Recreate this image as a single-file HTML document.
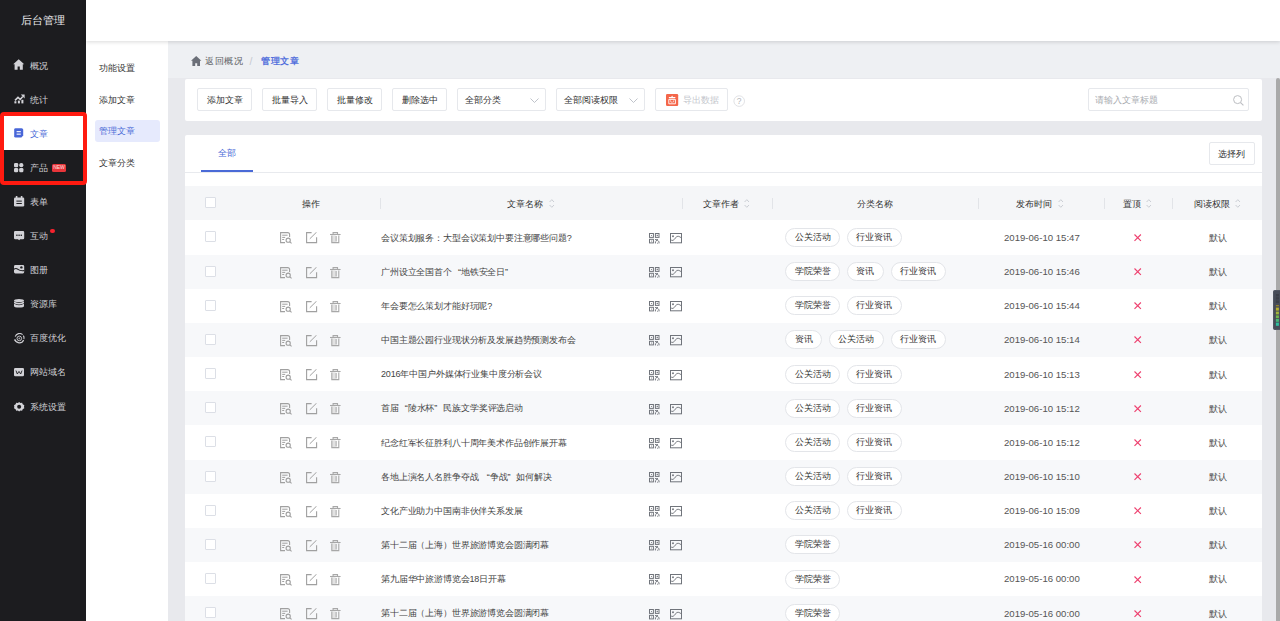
<!DOCTYPE html>
<html><head><meta charset="utf-8">
<style>
*{box-sizing:border-box;margin:0;padding:0}
html,body{width:1280px;height:621px;overflow:hidden;background:#eef0f3;font-family:"Liberation Sans",sans-serif;color:#333}
.abs{position:absolute}
#side{left:0;top:0;width:86px;height:621px;background:#1c1c1f}
#side .title{position:absolute;left:0;top:14px;width:86px;text-align:center;color:#e8e8ea;font-size:11px;line-height:13px}
.mi{position:absolute;left:0;width:86px;height:34px;color:#cfcfd4;font-size:9px}
.mi svg{position:absolute;left:13px;top:11px}
.mi .tx{position:absolute;left:30px;top:11.4px;line-height:12px;white-space:nowrap}
.mi.act{background:#fff;color:#4a6ad7}
.dot{position:absolute;left:50.4px;top:10.3px;width:4.5px;height:4.5px;border-radius:50%;background:#f5222d}
.new{position:absolute;left:52px;top:13.4px;width:13.8px;height:7.8px;background:#e8353a;border-radius:1.5px;color:#fbe0e0;font-size:5px;line-height:7.8px;text-align:center;letter-spacing:-0.1px}
#redbox{z-index:5;left:0;top:112px;width:87px;height:73px;border:4px solid #ff1a10;border-radius:4px}
#hdr{left:86px;top:0;width:1194px;height:41px;background:#fff;box-shadow:0 1px 4px rgba(0,0,0,.15)}
#sub{left:86px;top:41px;width:82px;height:580px;background:#fff}
.si{position:absolute;left:13px;font-size:9px;color:#333;line-height:12px;white-space:nowrap}
#subact{left:95px;top:120px;width:65px;height:22px;background:#e6eafd;border-radius:3px}
#scroll{left:168px;top:78px;width:1112px;height:543px;background:#e8e9ed}
#crumb{left:191px;top:55px;letter-spacing:0.6px;font-size:9px;line-height:13px;color:#606266;white-space:nowrap}
.card{position:absolute;left:185px;width:1077px;background:#fff;border-radius:2px}
.btn{position:absolute;top:88px;height:23px;border:1px solid #e6e8ec;border-radius:2px;background:#fff;font-size:9px;color:#333;line-height:23px;text-align:center;white-space:nowrap}
.sel{text-align:left;padding-left:7px}
#thumb{left:1276px;top:78px;width:4px;height:543px;background:#a9a9a9;border-radius:2px 2px 0 0}
.th{position:absolute;top:186px;left:185px;width:1077px;height:34px;background:#f5f6f8;font-size:9px;color:#333}
.th span{position:absolute;top:11.7px;line-height:12px;white-space:nowrap}
.sep{position:absolute;top:11.5px;width:1px;height:11px;background:#e2e4e8}
.sort{position:absolute;top:13px}
.row{position:absolute;left:185px;width:1077px;height:35px;background:#fff;font-size:9px;color:#444}
.row.g{background:#f7f8fa}
.cb{position:absolute;left:20px;top:11px;width:11px;height:11px;border:1px solid #dcdfe6;border-radius:1px;background:#fff}
.th .cb{top:11px}
.ops svg{position:absolute;top:12px}
.ops .iv{left:95px}.ops .ie{left:121px}.ops .id{left:145px}
.ttl{position:absolute;left:196px;top:11.2px;letter-spacing:-0.15px;line-height:12px;white-space:nowrap}
.qi svg{position:absolute;top:12.5px}
.qi .iq{left:464px}.qi .ii{left:485px}
.tags{position:absolute;left:600.4px;top:7.6px;height:19px;white-space:nowrap;font-size:0}
.tag{display:inline-block;height:19px;border:1px solid #e3e5e9;border-radius:10px;padding:0 8.5px;margin-right:6.6px;font-size:9px;line-height:17px;color:#333;background:#fff}
.date{position:absolute;left:819px;top:11.5px;line-height:12px;font-size:9.6px;color:#555;white-space:nowrap}
.x{position:absolute;left:949.3px;top:13.6px;line-height:0}
.perm{position:absolute;left:1023.5px;top:11.5px;line-height:12px;white-space:nowrap}
.ql,.qr{display:inline-block;font-style:normal;width:9px}.ql{text-align:right}.qr{text-align:left}

</style></head><body>
<div id="side" class="abs">
  <div class="title">后台管理</div>
  <div class="mi" style="top:48.2px"><svg width="12" height="12" viewBox="0 0 12 12" style="left:13px;top:11px"><path d="M5.7 0.2L11.2 5.3H9.8V10.7H6.8V7.6H4.6V10.7H1.6V5.3H0.2Z" fill="#d2d2d7"/></svg><div class="tx">概况</div></div>
  <div class="mi" style="top:82.3px"><svg width="12" height="12" viewBox="0 0 12 12" style="left:13.5px;top:10.6px"><path d="M1 7.4L4 4.4L6.2 6.4L8.8 3.5" fill="none" stroke="#d2d2d7" stroke-width="1.5"/><path d="M6.8 1.6H10.6V5.4Z" fill="#d2d2d7"/><rect x="0.4" y="8.2" width="2" height="2.2" fill="#d2d2d7"/><rect x="3.9" y="7.6" width="2" height="2.8" fill="#d2d2d7"/><rect x="7.4" y="6.8" width="2" height="3.6" fill="#d2d2d7"/></svg><div class="tx">统计</div></div>
  <div class="mi act" style="top:116.4px"><svg width="12" height="12" viewBox="0 0 12 12" style="left:14px;top:11.6px"><path d="M1.6 0.2H7.6Q9.2 0.2 9.2 1.8V7.6L7.4 9.6H1.6Q0.2 9.6 0.2 8.2V1.6Q0.2 0.2 1.6 0.2Z" fill="#4866d8"/><rect x="2.6" y="3.1" width="4.2" height="1.1" fill="#fff"/><rect x="2.6" y="5.6" width="4.2" height="1.1" fill="#fff"/></svg><div class="tx">文章</div></div>
  <div class="mi" style="top:150.5px"><svg width="12" height="12" viewBox="0 0 12 12" style="left:14px;top:12.6px"><rect x="0" y="0" width="4.2" height="4.2" rx="1.3" fill="#d2d2d7"/><rect x="5.2" y="0" width="4.2" height="4.2" rx="2" fill="#d2d2d7"/><rect x="0" y="5" width="4.2" height="4.2" rx="1.3" fill="#d2d2d7"/><rect x="5.2" y="5" width="4.2" height="4.2" rx="1.3" fill="#d2d2d7"/></svg><div class="tx">产品</div><div class="new">NEW</div></div>
  <div class="mi" style="top:184.6px"><svg width="12" height="12" viewBox="0 0 12 12" style="left:13.9px;top:11.6px"><path d="M1.2 1.6H9Q10.2 1.6 10.2 2.8V9.2Q10.2 10.4 9 10.4H1.2Q0 10.4 0 9.2V2.8Q0 1.6 1.2 1.6Z" fill="#d2d2d7"/><rect x="1.8" y="0" width="1.6" height="2.6" fill="#d2d2d7"/><rect x="6.8" y="0" width="1.6" height="2.6" fill="#d2d2d7"/><rect x="2.4" y="4.6" width="5.4" height="1" fill="#1c1c1f"/><rect x="2.4" y="7" width="5.4" height="1" fill="#1c1c1f"/></svg><div class="tx">表单</div><div class="dot" style="display:none"></div></div>
  <div class="mi" style="top:218.7px"><svg width="12" height="12" viewBox="0 0 12 12" style="left:13.9px;top:12.8px"><path d="M1.2 0H9Q10.2 0 10.2 1.2V7Q10.2 8.2 9 8.2H6.2L5.1 9.3L4 8.2H1.2Q0 8.2 0 7V1.2Q0 0 1.2 0Z" fill="#d2d2d7"/><rect x="2.2" y="3.6" width="1.4" height="1.3" fill="#1c1c1f"/><rect x="4.4" y="3.6" width="1.4" height="1.3" fill="#1c1c1f"/><rect x="6.6" y="3.6" width="1.4" height="1.3" fill="#1c1c1f"/></svg><div class="tx">互动</div><div class="dot"></div></div>
  <div class="mi" style="top:252.8px"><svg width="12" height="12" viewBox="0 0 12 12" style="left:13.9px;top:12.6px"><path d="M1.4 0H8.8Q10.2 0 10.2 1.4V7.1Q10.2 8.5 8.8 8.5H1.4Q0 8.5 0 7.1V1.4Q0 0 1.4 0Z" fill="#d2d2d7"/><path d="M-0.2 4.4Q1.8 2.6 4 4.4T10.4 5.6" fill="none" stroke="#1c1c1f" stroke-width="1.2"/><circle cx="7.4" cy="2.4" r="1.2" fill="#1c1c1f"/></svg><div class="tx">图册</div></div>
  <div class="mi" style="top:286.9px"><svg width="12" height="12" viewBox="0 0 12 12" style="left:13.9px;top:12.4px"><ellipse cx="5" cy="1.6" rx="5" ry="1.6" fill="#d2d2d7"/><path d="M0 2.6Q5 5.4 10 2.6V4.2Q5 7 0 4.2Z" fill="#d2d2d7"/><path d="M0 5Q5 7.8 10 5V6.6Q5 9.4 0 6.6Z" fill="#d2d2d7"/><path d="M0 5Q5 7.8 10 5V7Q10 8.6 5 8.6Q0 8.6 0 7Z" fill="#d2d2d7"/></svg><div class="tx">资源库</div></div>
  <div class="mi" style="top:321px"><svg width="12" height="12" viewBox="0 0 12 12" style="left:13.6px;top:11.5px"><path d="M8.6 1.6A4.6 4.6 0 0 0 1.2 3.6" fill="none" stroke="#cfcfd4" stroke-width="1.1"/><path d="M0.9 6.4A4.6 4.6 0 0 0 9.6 7" fill="none" stroke="#cfcfd4" stroke-width="1.1"/><path d="M9.4 2.6A4.6 4.6 0 0 1 9.9 6" fill="none" stroke="#cfcfd4" stroke-width="1.1"/><path d="M0.3 7.8L2.4 8.9L0.8 5.9Z" fill="#d2d2d7"/><circle cx="5.3" cy="5.4" r="2.3" fill="none" stroke="#cfcfd4" stroke-width="0.9"/><circle cx="5.3" cy="5.4" r="0.9" fill="#a0a0a5"/></svg><div class="tx">百度优化</div></div>
  <div class="mi" style="top:355.1px"><svg width="12" height="12" viewBox="0 0 12 12" style="left:14px;top:13px"><rect x="0" y="0" width="10" height="8.2" rx="1.3" fill="#d2d2d7"/><path d="M2 2.6L3.3 6L5 3.4L6.7 6L8 2.6" fill="none" stroke="#1c1c1f" stroke-width="0.9"/></svg><div class="tx">网站域名</div></div>
  <div class="mi" style="top:389.2px"><svg width="12" height="12" viewBox="0 0 12 12" style="left:13.7px;top:12.4px"><path d="M5.15 0L6.4 0.9L8.1 0.8L8.7 2.3L10.3 3.2L10 4.75L10.3 6.3L8.7 7.2L8.1 8.7L6.4 8.6L5.15 9.5L3.9 8.6L2.2 8.7L1.6 7.2L0 6.3L0.3 4.75L0 3.2L1.6 2.3L2.2 0.8L3.9 0.9Z" fill="#d2d2d7"/><circle cx="5.15" cy="4.75" r="2" fill="#1c1c1f"/></svg><div class="tx">系统设置</div></div>
</div>
<div id="redbox" class="abs"></div>
<div id="sub" class="abs">
  <div class="si" style="top:21px">功能设置</div>
  <div class="si" style="top:52.5px">添加文章</div>
  <div class="si" style="top:115.5px">文章分类</div>
</div>
<div id="subact" class="abs"></div>
<div class="si abs" style="left:99px;top:125px;color:#4a6ad7">管理文章</div>
<div id="hdr" class="abs"></div>
<div id="scroll" class="abs"></div>
<div id="thumb" class="abs"></div>
<div id="crumb" class="abs"><svg width="12" height="11" viewBox="0 0 12 11" style="position:absolute;left:0;top:1px"><path d="M5.2 0L10.4 4.8H9V10H6.2V7.2H4.2V10H1.4V4.8H0Z" fill="#6b6f78"/></svg><span style="position:absolute;left:14px;top:0">返回概况</span><span style="position:absolute;left:58.6px;top:-0.5px;color:#c6c9cf;font-size:10.5px">/</span><span style="position:absolute;left:70px;top:0;color:#5470dc;font-weight:600">管理文章</span></div>
<div class="card" style="top:78.5px;height:42.5px"></div>
<div class="card" style="top:135px;height:486px"></div>
<div class="btn" style="left:197px;width:55px">添加文章</div>
<div class="btn" style="left:262px;width:55px">批量导入</div>
<div class="btn" style="left:327px;width:55px">批量修改</div>
<div class="btn" style="left:392px;width:55px">删除选中</div>
<div class="btn sel" style="left:457px;width:89px">全部分类<svg width="10" height="6" viewBox="0 0 10 6" style="position:absolute;left:72px;top:9px"><path d="M0.5 0.5L4.5 4.5L8.5 0.5" fill="none" stroke="#b8bcc4" stroke-width="0.9"/></svg></div>
<div class="btn sel" style="left:556px;width:89px">全部阅读权限<svg width="10" height="6" viewBox="0 0 10 6" style="position:absolute;left:72px;top:9px"><path d="M0.5 0.5L4.5 4.5L8.5 0.5" fill="none" stroke="#b8bcc4" stroke-width="0.9"/></svg></div>
<div class="btn" style="left:655px;width:73px;color:#c3c6cc;padding-left:18px"><svg width="13" height="13" viewBox="0 0 13 13" style="position:absolute;left:10px;top:5px"><rect x="0" y="0" width="12.2" height="12" rx="1.2" fill="#f4664a"/><path d="M6.1 1.6L7 3H9.6L9 4.2H3.2L2.6 3H5.2Z" fill="#fff"/><path d="M2.8 5.4H9.4V9.8H2.8Z" fill="none" stroke="#fff" stroke-width="0.9"/><path d="M4.4 6.4L5.4 8.6M7.8 6.4L6.8 8.6" stroke="#fff" stroke-width="0.8"/></svg>导出数据</div>
<svg class="abs" width="13" height="13" viewBox="0 0 13 13" style="left:733px;top:94.5px"><circle cx="6.2" cy="6.1" r="5.3" fill="none" stroke="#dedfe2" stroke-width="0.9"/><text x="6.2" y="9" text-anchor="middle" font-size="8.5" fill="#b4b6ba" font-family="Liberation Sans">?</text></svg>
<div class="btn sel" style="left:1088px;width:161px;color:#a8abb0;padding-left:5.8px">请输入文章标题<svg width="14" height="12" viewBox="0 0 14 12" style="position:absolute;left:144px;top:5.6px"><circle cx="4.6" cy="4.6" r="4" fill="none" stroke="#bcbec2" stroke-width="1"/><path d="M7.6 7.6L10.4 10.4" stroke="#bcbec2" stroke-width="1.1"/></svg></div>
<div class="btn" style="left:1209px;top:142px;width:45.5px">选择列</div>
<div class="abs" style="left:218px;top:147px;font-size:9px;line-height:12px;color:#4a6ad7">全部</div>
<div class="abs" style="left:185px;top:172px;width:1077px;height:1px;background:#e8eaee"></div>
<div class="abs" style="left:201px;top:170px;width:52px;height:2px;background:#4a6ad7"></div>
<div class="th"><i class="cb"></i>
<span style="left:116.5px">操作</span>
<i class="sep" style="left:195px"></i>
<span style="left:322px">文章名称</span><svg class="sort" width="6" height="10" viewBox="0 0 6 10" style="left:363.5px"><path d="M0.6 3L2.8 0.7L5 3M0.6 6L2.8 8.3L5 6" fill="none" stroke="#bfc3ca" stroke-width="0.8"/></svg>
<i class="sep" style="left:496.5px"></i>
<span style="left:517.5px">文章作者</span><svg class="sort" width="6" height="10" viewBox="0 0 6 10" style="left:559px"><path d="M0.6 3L2.8 0.7L5 3M0.6 6L2.8 8.3L5 6" fill="none" stroke="#bfc3ca" stroke-width="0.8"/></svg>
<i class="sep" style="left:586.5px"></i>
<span style="left:671.5px">分类名称</span>
<i class="sep" style="left:792.5px"></i>
<span style="left:831px">发布时间</span><svg class="sort" width="6" height="10" viewBox="0 0 6 10" style="left:872.5px"><path d="M0.6 3L2.8 0.7L5 3M0.6 6L2.8 8.3L5 6" fill="none" stroke="#bfc3ca" stroke-width="0.8"/></svg>
<i class="sep" style="left:918.5px"></i>
<span style="left:937.5px">置顶</span><svg class="sort" width="6" height="10" viewBox="0 0 6 10" style="left:961px"><path d="M0.6 3L2.8 0.7L5 3M0.6 6L2.8 8.3L5 6" fill="none" stroke="#bfc3ca" stroke-width="0.8"/></svg>
<i class="sep" style="left:987px"></i>
<span style="left:1008.5px">阅读权限</span><svg class="sort" width="6" height="10" viewBox="0 0 6 10" style="left:1050px"><path d="M0.6 3L2.8 0.7L5 3M0.6 6L2.8 8.3L5 6" fill="none" stroke="#bfc3ca" stroke-width="0.8"/></svg>
</div>
<svg class="abs" style="left:1273px;top:289.6px;z-index:6" width="7" height="40" viewBox="0 0 7 40"><rect x="0" y="0" width="9" height="40" rx="2" fill="#474c58"/><rect x="0.5" y="0.5" width="9" height="39" rx="1.8" fill="none" stroke="#5a606c" stroke-width="0.6"/><rect x="2.9" y="4" width="3" height="2.4" fill="#3b3f48"/><rect x="2.9" y="7.2" width="3" height="2.4" fill="#3b3f48"/><rect x="2.9" y="10.4" width="3" height="2.6" fill="#3b3f48"/><rect x="2.9" y="15.4" width="3" height="0.8" fill="#c9a40c"/><rect x="2.9" y="17.6" width="3" height="3" fill="#b6b12e"/><rect x="2.9" y="21.6" width="3" height="2.8" fill="#a2b63a"/><rect x="2.9" y="25.4" width="3" height="2.8" fill="#72b64c"/><rect x="2.9" y="29" width="3" height="2.8" fill="#45b877"/><rect x="2.9" y="32.6" width="3" height="3.2" fill="#2fbe9e"/></svg>

<div id="rows">
<div class="row" style="top:220.45px"><i class="cb"></i><span class="ops"><svg class="iv" width="13" height="12" viewBox="0 0 13 12"><path d="M5 10.6H0.6V0.6H7.6Q9.6 0.6 9.6 2.6V5" fill="none" stroke="#a0a0a0" stroke-width="1.1"/><path d="M2.2 3.2H7.6M2.2 5.4H5.2M2.2 7.5H4.2" stroke="#a0a0a0" stroke-width="1"/><circle cx="8.2" cy="8.2" r="2.1" fill="none" stroke="#a0a0a0" stroke-width="1.1"/><path d="M9.8 9.8L11.6 11.4" stroke="#a0a0a0" stroke-width="1.1"/></svg><svg class="ie" width="12" height="12" viewBox="0 0 12 12"><path d="M5.6 0.6H0.6V10.6H10.6V5.2" fill="none" stroke="#a0a0a0" stroke-width="1.1"/><path d="M3.8 6.8L10.6 0.1" stroke="#a0a0a0" stroke-width="1"/></svg><svg class="id" width="12" height="12" viewBox="0 0 12 12"><path d="M0 2.5H10.6" stroke="#a8a8a8" stroke-width="1.1"/><path d="M3.1 2.4V0.6H7.5V2.4" fill="none" stroke="#a8a8a8" stroke-width="1.1"/><path d="M1.8 3.4H5.6V10.6H1.8Z" fill="#e2e2e2"/><path d="M1.8 3.4V10.6H8.8V3.4M6.1 4V9.6" fill="none" stroke="#a8a8a8" stroke-width="1.1"/></svg></span><span class="ttl">会议策划服务：大型会议策划中要注意哪些问题?</span><span class="qi"><svg class="iq" width="11" height="11" viewBox="0 0 11 11"><rect x="0.5" y="0.5" width="3.9" height="3.9" fill="none" stroke="#70747b" stroke-width="1"/><rect x="2" y="2" width="0.9" height="0.9" fill="#70747b"/><rect x="6.4" y="0.5" width="3.6" height="3.9" fill="none" stroke="#70747b" stroke-width="1"/><rect x="7.6" y="1.8" width="1.3" height="1.3" fill="#70747b"/><rect x="0.5" y="6.3" width="3.9" height="3.6" fill="none" stroke="#70747b" stroke-width="1"/><rect x="2" y="7.6" width="0.9" height="0.9" fill="#70747b"/><path d="M6 6.6H7.6V8.2M6.4 8.4V10.4M8.4 6V7.2L10 8.8V10.4M8 10.2H8.8" fill="none" stroke="#70747b" stroke-width="1"/></svg><svg class="ii" width="13" height="11" viewBox="0 0 13 11"><rect x="0.5" y="0.5" width="11" height="9.3" fill="none" stroke="#70747b" stroke-width="1"/><circle cx="3" cy="3.2" r="0.95" fill="#70747b"/><path d="M0.6 6.6Q1.8 7.8 3 7.4T6.8 3.4Q8.6 2.6 11.4 4.8" fill="none" stroke="#70747b" stroke-width="0.9"/></svg></span><span class="tags"><span class="tag">公关活动</span><span class="tag">行业资讯</span></span><span class="date">2019-06-10 15:47</span><span class="x"><svg width="8" height="8" viewBox="0 0 8 8"><path d="M0.5 0.5L6.9 6.9M6.9 0.5L0.5 6.9" stroke="#ee4270" stroke-width="1.15"/></svg></span><span class="perm">默认</span></div>
<div class="row g" style="top:254.60px"><i class="cb"></i><span class="ops"><svg class="iv" width="13" height="12" viewBox="0 0 13 12"><path d="M5 10.6H0.6V0.6H7.6Q9.6 0.6 9.6 2.6V5" fill="none" stroke="#a0a0a0" stroke-width="1.1"/><path d="M2.2 3.2H7.6M2.2 5.4H5.2M2.2 7.5H4.2" stroke="#a0a0a0" stroke-width="1"/><circle cx="8.2" cy="8.2" r="2.1" fill="none" stroke="#a0a0a0" stroke-width="1.1"/><path d="M9.8 9.8L11.6 11.4" stroke="#a0a0a0" stroke-width="1.1"/></svg><svg class="ie" width="12" height="12" viewBox="0 0 12 12"><path d="M5.6 0.6H0.6V10.6H10.6V5.2" fill="none" stroke="#a0a0a0" stroke-width="1.1"/><path d="M3.8 6.8L10.6 0.1" stroke="#a0a0a0" stroke-width="1"/></svg><svg class="id" width="12" height="12" viewBox="0 0 12 12"><path d="M0 2.5H10.6" stroke="#a8a8a8" stroke-width="1.1"/><path d="M3.1 2.4V0.6H7.5V2.4" fill="none" stroke="#a8a8a8" stroke-width="1.1"/><path d="M1.8 3.4H5.6V10.6H1.8Z" fill="#e2e2e2"/><path d="M1.8 3.4V10.6H8.8V3.4M6.1 4V9.6" fill="none" stroke="#a8a8a8" stroke-width="1.1"/></svg></span><span class="ttl">广州设立全国首个<i class="ql">“</i>地铁安全日<i class="qr">”</i></span><span class="qi"><svg class="iq" width="11" height="11" viewBox="0 0 11 11"><rect x="0.5" y="0.5" width="3.9" height="3.9" fill="none" stroke="#70747b" stroke-width="1"/><rect x="2" y="2" width="0.9" height="0.9" fill="#70747b"/><rect x="6.4" y="0.5" width="3.6" height="3.9" fill="none" stroke="#70747b" stroke-width="1"/><rect x="7.6" y="1.8" width="1.3" height="1.3" fill="#70747b"/><rect x="0.5" y="6.3" width="3.9" height="3.6" fill="none" stroke="#70747b" stroke-width="1"/><rect x="2" y="7.6" width="0.9" height="0.9" fill="#70747b"/><path d="M6 6.6H7.6V8.2M6.4 8.4V10.4M8.4 6V7.2L10 8.8V10.4M8 10.2H8.8" fill="none" stroke="#70747b" stroke-width="1"/></svg><svg class="ii" width="13" height="11" viewBox="0 0 13 11"><rect x="0.5" y="0.5" width="11" height="9.3" fill="none" stroke="#70747b" stroke-width="1"/><circle cx="3" cy="3.2" r="0.95" fill="#70747b"/><path d="M0.6 6.6Q1.8 7.8 3 7.4T6.8 3.4Q8.6 2.6 11.4 4.8" fill="none" stroke="#70747b" stroke-width="0.9"/></svg></span><span class="tags"><span class="tag">学院荣誉</span><span class="tag">资讯</span><span class="tag">行业资讯</span></span><span class="date">2019-06-10 15:46</span><span class="x"><svg width="8" height="8" viewBox="0 0 8 8"><path d="M0.5 0.5L6.9 6.9M6.9 0.5L0.5 6.9" stroke="#ee4270" stroke-width="1.15"/></svg></span><span class="perm">默认</span></div>
<div class="row" style="top:288.75px"><i class="cb"></i><span class="ops"><svg class="iv" width="13" height="12" viewBox="0 0 13 12"><path d="M5 10.6H0.6V0.6H7.6Q9.6 0.6 9.6 2.6V5" fill="none" stroke="#a0a0a0" stroke-width="1.1"/><path d="M2.2 3.2H7.6M2.2 5.4H5.2M2.2 7.5H4.2" stroke="#a0a0a0" stroke-width="1"/><circle cx="8.2" cy="8.2" r="2.1" fill="none" stroke="#a0a0a0" stroke-width="1.1"/><path d="M9.8 9.8L11.6 11.4" stroke="#a0a0a0" stroke-width="1.1"/></svg><svg class="ie" width="12" height="12" viewBox="0 0 12 12"><path d="M5.6 0.6H0.6V10.6H10.6V5.2" fill="none" stroke="#a0a0a0" stroke-width="1.1"/><path d="M3.8 6.8L10.6 0.1" stroke="#a0a0a0" stroke-width="1"/></svg><svg class="id" width="12" height="12" viewBox="0 0 12 12"><path d="M0 2.5H10.6" stroke="#a8a8a8" stroke-width="1.1"/><path d="M3.1 2.4V0.6H7.5V2.4" fill="none" stroke="#a8a8a8" stroke-width="1.1"/><path d="M1.8 3.4H5.6V10.6H1.8Z" fill="#e2e2e2"/><path d="M1.8 3.4V10.6H8.8V3.4M6.1 4V9.6" fill="none" stroke="#a8a8a8" stroke-width="1.1"/></svg></span><span class="ttl">年会要怎么策划才能好玩呢?</span><span class="qi"><svg class="iq" width="11" height="11" viewBox="0 0 11 11"><rect x="0.5" y="0.5" width="3.9" height="3.9" fill="none" stroke="#70747b" stroke-width="1"/><rect x="2" y="2" width="0.9" height="0.9" fill="#70747b"/><rect x="6.4" y="0.5" width="3.6" height="3.9" fill="none" stroke="#70747b" stroke-width="1"/><rect x="7.6" y="1.8" width="1.3" height="1.3" fill="#70747b"/><rect x="0.5" y="6.3" width="3.9" height="3.6" fill="none" stroke="#70747b" stroke-width="1"/><rect x="2" y="7.6" width="0.9" height="0.9" fill="#70747b"/><path d="M6 6.6H7.6V8.2M6.4 8.4V10.4M8.4 6V7.2L10 8.8V10.4M8 10.2H8.8" fill="none" stroke="#70747b" stroke-width="1"/></svg><svg class="ii" width="13" height="11" viewBox="0 0 13 11"><rect x="0.5" y="0.5" width="11" height="9.3" fill="none" stroke="#70747b" stroke-width="1"/><circle cx="3" cy="3.2" r="0.95" fill="#70747b"/><path d="M0.6 6.6Q1.8 7.8 3 7.4T6.8 3.4Q8.6 2.6 11.4 4.8" fill="none" stroke="#70747b" stroke-width="0.9"/></svg></span><span class="tags"><span class="tag">学院荣誉</span><span class="tag">行业资讯</span></span><span class="date">2019-06-10 15:44</span><span class="x"><svg width="8" height="8" viewBox="0 0 8 8"><path d="M0.5 0.5L6.9 6.9M6.9 0.5L0.5 6.9" stroke="#ee4270" stroke-width="1.15"/></svg></span><span class="perm">默认</span></div>
<div class="row g" style="top:322.90px"><i class="cb"></i><span class="ops"><svg class="iv" width="13" height="12" viewBox="0 0 13 12"><path d="M5 10.6H0.6V0.6H7.6Q9.6 0.6 9.6 2.6V5" fill="none" stroke="#a0a0a0" stroke-width="1.1"/><path d="M2.2 3.2H7.6M2.2 5.4H5.2M2.2 7.5H4.2" stroke="#a0a0a0" stroke-width="1"/><circle cx="8.2" cy="8.2" r="2.1" fill="none" stroke="#a0a0a0" stroke-width="1.1"/><path d="M9.8 9.8L11.6 11.4" stroke="#a0a0a0" stroke-width="1.1"/></svg><svg class="ie" width="12" height="12" viewBox="0 0 12 12"><path d="M5.6 0.6H0.6V10.6H10.6V5.2" fill="none" stroke="#a0a0a0" stroke-width="1.1"/><path d="M3.8 6.8L10.6 0.1" stroke="#a0a0a0" stroke-width="1"/></svg><svg class="id" width="12" height="12" viewBox="0 0 12 12"><path d="M0 2.5H10.6" stroke="#a8a8a8" stroke-width="1.1"/><path d="M3.1 2.4V0.6H7.5V2.4" fill="none" stroke="#a8a8a8" stroke-width="1.1"/><path d="M1.8 3.4H5.6V10.6H1.8Z" fill="#e2e2e2"/><path d="M1.8 3.4V10.6H8.8V3.4M6.1 4V9.6" fill="none" stroke="#a8a8a8" stroke-width="1.1"/></svg></span><span class="ttl">中国主题公园行业现状分析及发展趋势预测发布会</span><span class="qi"><svg class="iq" width="11" height="11" viewBox="0 0 11 11"><rect x="0.5" y="0.5" width="3.9" height="3.9" fill="none" stroke="#70747b" stroke-width="1"/><rect x="2" y="2" width="0.9" height="0.9" fill="#70747b"/><rect x="6.4" y="0.5" width="3.6" height="3.9" fill="none" stroke="#70747b" stroke-width="1"/><rect x="7.6" y="1.8" width="1.3" height="1.3" fill="#70747b"/><rect x="0.5" y="6.3" width="3.9" height="3.6" fill="none" stroke="#70747b" stroke-width="1"/><rect x="2" y="7.6" width="0.9" height="0.9" fill="#70747b"/><path d="M6 6.6H7.6V8.2M6.4 8.4V10.4M8.4 6V7.2L10 8.8V10.4M8 10.2H8.8" fill="none" stroke="#70747b" stroke-width="1"/></svg><svg class="ii" width="13" height="11" viewBox="0 0 13 11"><rect x="0.5" y="0.5" width="11" height="9.3" fill="none" stroke="#70747b" stroke-width="1"/><circle cx="3" cy="3.2" r="0.95" fill="#70747b"/><path d="M0.6 6.6Q1.8 7.8 3 7.4T6.8 3.4Q8.6 2.6 11.4 4.8" fill="none" stroke="#70747b" stroke-width="0.9"/></svg></span><span class="tags"><span class="tag">资讯</span><span class="tag">公关活动</span><span class="tag">行业资讯</span></span><span class="date">2019-06-10 15:14</span><span class="x"><svg width="8" height="8" viewBox="0 0 8 8"><path d="M0.5 0.5L6.9 6.9M6.9 0.5L0.5 6.9" stroke="#ee4270" stroke-width="1.15"/></svg></span><span class="perm">默认</span></div>
<div class="row" style="top:357.05px"><i class="cb"></i><span class="ops"><svg class="iv" width="13" height="12" viewBox="0 0 13 12"><path d="M5 10.6H0.6V0.6H7.6Q9.6 0.6 9.6 2.6V5" fill="none" stroke="#a0a0a0" stroke-width="1.1"/><path d="M2.2 3.2H7.6M2.2 5.4H5.2M2.2 7.5H4.2" stroke="#a0a0a0" stroke-width="1"/><circle cx="8.2" cy="8.2" r="2.1" fill="none" stroke="#a0a0a0" stroke-width="1.1"/><path d="M9.8 9.8L11.6 11.4" stroke="#a0a0a0" stroke-width="1.1"/></svg><svg class="ie" width="12" height="12" viewBox="0 0 12 12"><path d="M5.6 0.6H0.6V10.6H10.6V5.2" fill="none" stroke="#a0a0a0" stroke-width="1.1"/><path d="M3.8 6.8L10.6 0.1" stroke="#a0a0a0" stroke-width="1"/></svg><svg class="id" width="12" height="12" viewBox="0 0 12 12"><path d="M0 2.5H10.6" stroke="#a8a8a8" stroke-width="1.1"/><path d="M3.1 2.4V0.6H7.5V2.4" fill="none" stroke="#a8a8a8" stroke-width="1.1"/><path d="M1.8 3.4H5.6V10.6H1.8Z" fill="#e2e2e2"/><path d="M1.8 3.4V10.6H8.8V3.4M6.1 4V9.6" fill="none" stroke="#a8a8a8" stroke-width="1.1"/></svg></span><span class="ttl">2016年中国户外媒体行业集中度分析会议</span><span class="qi"><svg class="iq" width="11" height="11" viewBox="0 0 11 11"><rect x="0.5" y="0.5" width="3.9" height="3.9" fill="none" stroke="#70747b" stroke-width="1"/><rect x="2" y="2" width="0.9" height="0.9" fill="#70747b"/><rect x="6.4" y="0.5" width="3.6" height="3.9" fill="none" stroke="#70747b" stroke-width="1"/><rect x="7.6" y="1.8" width="1.3" height="1.3" fill="#70747b"/><rect x="0.5" y="6.3" width="3.9" height="3.6" fill="none" stroke="#70747b" stroke-width="1"/><rect x="2" y="7.6" width="0.9" height="0.9" fill="#70747b"/><path d="M6 6.6H7.6V8.2M6.4 8.4V10.4M8.4 6V7.2L10 8.8V10.4M8 10.2H8.8" fill="none" stroke="#70747b" stroke-width="1"/></svg><svg class="ii" width="13" height="11" viewBox="0 0 13 11"><rect x="0.5" y="0.5" width="11" height="9.3" fill="none" stroke="#70747b" stroke-width="1"/><circle cx="3" cy="3.2" r="0.95" fill="#70747b"/><path d="M0.6 6.6Q1.8 7.8 3 7.4T6.8 3.4Q8.6 2.6 11.4 4.8" fill="none" stroke="#70747b" stroke-width="0.9"/></svg></span><span class="tags"><span class="tag">公关活动</span><span class="tag">行业资讯</span></span><span class="date">2019-06-10 15:13</span><span class="x"><svg width="8" height="8" viewBox="0 0 8 8"><path d="M0.5 0.5L6.9 6.9M6.9 0.5L0.5 6.9" stroke="#ee4270" stroke-width="1.15"/></svg></span><span class="perm">默认</span></div>
<div class="row g" style="top:391.20px"><i class="cb"></i><span class="ops"><svg class="iv" width="13" height="12" viewBox="0 0 13 12"><path d="M5 10.6H0.6V0.6H7.6Q9.6 0.6 9.6 2.6V5" fill="none" stroke="#a0a0a0" stroke-width="1.1"/><path d="M2.2 3.2H7.6M2.2 5.4H5.2M2.2 7.5H4.2" stroke="#a0a0a0" stroke-width="1"/><circle cx="8.2" cy="8.2" r="2.1" fill="none" stroke="#a0a0a0" stroke-width="1.1"/><path d="M9.8 9.8L11.6 11.4" stroke="#a0a0a0" stroke-width="1.1"/></svg><svg class="ie" width="12" height="12" viewBox="0 0 12 12"><path d="M5.6 0.6H0.6V10.6H10.6V5.2" fill="none" stroke="#a0a0a0" stroke-width="1.1"/><path d="M3.8 6.8L10.6 0.1" stroke="#a0a0a0" stroke-width="1"/></svg><svg class="id" width="12" height="12" viewBox="0 0 12 12"><path d="M0 2.5H10.6" stroke="#a8a8a8" stroke-width="1.1"/><path d="M3.1 2.4V0.6H7.5V2.4" fill="none" stroke="#a8a8a8" stroke-width="1.1"/><path d="M1.8 3.4H5.6V10.6H1.8Z" fill="#e2e2e2"/><path d="M1.8 3.4V10.6H8.8V3.4M6.1 4V9.6" fill="none" stroke="#a8a8a8" stroke-width="1.1"/></svg></span><span class="ttl">首届<i class="ql">“</i>陵水杯<i class="qr">”</i>民族文学奖评选启动</span><span class="qi"><svg class="iq" width="11" height="11" viewBox="0 0 11 11"><rect x="0.5" y="0.5" width="3.9" height="3.9" fill="none" stroke="#70747b" stroke-width="1"/><rect x="2" y="2" width="0.9" height="0.9" fill="#70747b"/><rect x="6.4" y="0.5" width="3.6" height="3.9" fill="none" stroke="#70747b" stroke-width="1"/><rect x="7.6" y="1.8" width="1.3" height="1.3" fill="#70747b"/><rect x="0.5" y="6.3" width="3.9" height="3.6" fill="none" stroke="#70747b" stroke-width="1"/><rect x="2" y="7.6" width="0.9" height="0.9" fill="#70747b"/><path d="M6 6.6H7.6V8.2M6.4 8.4V10.4M8.4 6V7.2L10 8.8V10.4M8 10.2H8.8" fill="none" stroke="#70747b" stroke-width="1"/></svg><svg class="ii" width="13" height="11" viewBox="0 0 13 11"><rect x="0.5" y="0.5" width="11" height="9.3" fill="none" stroke="#70747b" stroke-width="1"/><circle cx="3" cy="3.2" r="0.95" fill="#70747b"/><path d="M0.6 6.6Q1.8 7.8 3 7.4T6.8 3.4Q8.6 2.6 11.4 4.8" fill="none" stroke="#70747b" stroke-width="0.9"/></svg></span><span class="tags"><span class="tag">公关活动</span><span class="tag">行业资讯</span></span><span class="date">2019-06-10 15:12</span><span class="x"><svg width="8" height="8" viewBox="0 0 8 8"><path d="M0.5 0.5L6.9 6.9M6.9 0.5L0.5 6.9" stroke="#ee4270" stroke-width="1.15"/></svg></span><span class="perm">默认</span></div>
<div class="row" style="top:425.35px"><i class="cb"></i><span class="ops"><svg class="iv" width="13" height="12" viewBox="0 0 13 12"><path d="M5 10.6H0.6V0.6H7.6Q9.6 0.6 9.6 2.6V5" fill="none" stroke="#a0a0a0" stroke-width="1.1"/><path d="M2.2 3.2H7.6M2.2 5.4H5.2M2.2 7.5H4.2" stroke="#a0a0a0" stroke-width="1"/><circle cx="8.2" cy="8.2" r="2.1" fill="none" stroke="#a0a0a0" stroke-width="1.1"/><path d="M9.8 9.8L11.6 11.4" stroke="#a0a0a0" stroke-width="1.1"/></svg><svg class="ie" width="12" height="12" viewBox="0 0 12 12"><path d="M5.6 0.6H0.6V10.6H10.6V5.2" fill="none" stroke="#a0a0a0" stroke-width="1.1"/><path d="M3.8 6.8L10.6 0.1" stroke="#a0a0a0" stroke-width="1"/></svg><svg class="id" width="12" height="12" viewBox="0 0 12 12"><path d="M0 2.5H10.6" stroke="#a8a8a8" stroke-width="1.1"/><path d="M3.1 2.4V0.6H7.5V2.4" fill="none" stroke="#a8a8a8" stroke-width="1.1"/><path d="M1.8 3.4H5.6V10.6H1.8Z" fill="#e2e2e2"/><path d="M1.8 3.4V10.6H8.8V3.4M6.1 4V9.6" fill="none" stroke="#a8a8a8" stroke-width="1.1"/></svg></span><span class="ttl">纪念红军长征胜利八十周年美术作品创作展开幕</span><span class="qi"><svg class="iq" width="11" height="11" viewBox="0 0 11 11"><rect x="0.5" y="0.5" width="3.9" height="3.9" fill="none" stroke="#70747b" stroke-width="1"/><rect x="2" y="2" width="0.9" height="0.9" fill="#70747b"/><rect x="6.4" y="0.5" width="3.6" height="3.9" fill="none" stroke="#70747b" stroke-width="1"/><rect x="7.6" y="1.8" width="1.3" height="1.3" fill="#70747b"/><rect x="0.5" y="6.3" width="3.9" height="3.6" fill="none" stroke="#70747b" stroke-width="1"/><rect x="2" y="7.6" width="0.9" height="0.9" fill="#70747b"/><path d="M6 6.6H7.6V8.2M6.4 8.4V10.4M8.4 6V7.2L10 8.8V10.4M8 10.2H8.8" fill="none" stroke="#70747b" stroke-width="1"/></svg><svg class="ii" width="13" height="11" viewBox="0 0 13 11"><rect x="0.5" y="0.5" width="11" height="9.3" fill="none" stroke="#70747b" stroke-width="1"/><circle cx="3" cy="3.2" r="0.95" fill="#70747b"/><path d="M0.6 6.6Q1.8 7.8 3 7.4T6.8 3.4Q8.6 2.6 11.4 4.8" fill="none" stroke="#70747b" stroke-width="0.9"/></svg></span><span class="tags"><span class="tag">公关活动</span><span class="tag">行业资讯</span></span><span class="date">2019-06-10 15:12</span><span class="x"><svg width="8" height="8" viewBox="0 0 8 8"><path d="M0.5 0.5L6.9 6.9M6.9 0.5L0.5 6.9" stroke="#ee4270" stroke-width="1.15"/></svg></span><span class="perm">默认</span></div>
<div class="row g" style="top:459.50px"><i class="cb"></i><span class="ops"><svg class="iv" width="13" height="12" viewBox="0 0 13 12"><path d="M5 10.6H0.6V0.6H7.6Q9.6 0.6 9.6 2.6V5" fill="none" stroke="#a0a0a0" stroke-width="1.1"/><path d="M2.2 3.2H7.6M2.2 5.4H5.2M2.2 7.5H4.2" stroke="#a0a0a0" stroke-width="1"/><circle cx="8.2" cy="8.2" r="2.1" fill="none" stroke="#a0a0a0" stroke-width="1.1"/><path d="M9.8 9.8L11.6 11.4" stroke="#a0a0a0" stroke-width="1.1"/></svg><svg class="ie" width="12" height="12" viewBox="0 0 12 12"><path d="M5.6 0.6H0.6V10.6H10.6V5.2" fill="none" stroke="#a0a0a0" stroke-width="1.1"/><path d="M3.8 6.8L10.6 0.1" stroke="#a0a0a0" stroke-width="1"/></svg><svg class="id" width="12" height="12" viewBox="0 0 12 12"><path d="M0 2.5H10.6" stroke="#a8a8a8" stroke-width="1.1"/><path d="M3.1 2.4V0.6H7.5V2.4" fill="none" stroke="#a8a8a8" stroke-width="1.1"/><path d="M1.8 3.4H5.6V10.6H1.8Z" fill="#e2e2e2"/><path d="M1.8 3.4V10.6H8.8V3.4M6.1 4V9.6" fill="none" stroke="#a8a8a8" stroke-width="1.1"/></svg></span><span class="ttl">各地上演名人名胜争夺战 <i class="ql">“</i>争战<i class="qr">”</i>如何解决</span><span class="qi"><svg class="iq" width="11" height="11" viewBox="0 0 11 11"><rect x="0.5" y="0.5" width="3.9" height="3.9" fill="none" stroke="#70747b" stroke-width="1"/><rect x="2" y="2" width="0.9" height="0.9" fill="#70747b"/><rect x="6.4" y="0.5" width="3.6" height="3.9" fill="none" stroke="#70747b" stroke-width="1"/><rect x="7.6" y="1.8" width="1.3" height="1.3" fill="#70747b"/><rect x="0.5" y="6.3" width="3.9" height="3.6" fill="none" stroke="#70747b" stroke-width="1"/><rect x="2" y="7.6" width="0.9" height="0.9" fill="#70747b"/><path d="M6 6.6H7.6V8.2M6.4 8.4V10.4M8.4 6V7.2L10 8.8V10.4M8 10.2H8.8" fill="none" stroke="#70747b" stroke-width="1"/></svg><svg class="ii" width="13" height="11" viewBox="0 0 13 11"><rect x="0.5" y="0.5" width="11" height="9.3" fill="none" stroke="#70747b" stroke-width="1"/><circle cx="3" cy="3.2" r="0.95" fill="#70747b"/><path d="M0.6 6.6Q1.8 7.8 3 7.4T6.8 3.4Q8.6 2.6 11.4 4.8" fill="none" stroke="#70747b" stroke-width="0.9"/></svg></span><span class="tags"><span class="tag">公关活动</span><span class="tag">行业资讯</span></span><span class="date">2019-06-10 15:10</span><span class="x"><svg width="8" height="8" viewBox="0 0 8 8"><path d="M0.5 0.5L6.9 6.9M6.9 0.5L0.5 6.9" stroke="#ee4270" stroke-width="1.15"/></svg></span><span class="perm">默认</span></div>
<div class="row" style="top:493.65px"><i class="cb"></i><span class="ops"><svg class="iv" width="13" height="12" viewBox="0 0 13 12"><path d="M5 10.6H0.6V0.6H7.6Q9.6 0.6 9.6 2.6V5" fill="none" stroke="#a0a0a0" stroke-width="1.1"/><path d="M2.2 3.2H7.6M2.2 5.4H5.2M2.2 7.5H4.2" stroke="#a0a0a0" stroke-width="1"/><circle cx="8.2" cy="8.2" r="2.1" fill="none" stroke="#a0a0a0" stroke-width="1.1"/><path d="M9.8 9.8L11.6 11.4" stroke="#a0a0a0" stroke-width="1.1"/></svg><svg class="ie" width="12" height="12" viewBox="0 0 12 12"><path d="M5.6 0.6H0.6V10.6H10.6V5.2" fill="none" stroke="#a0a0a0" stroke-width="1.1"/><path d="M3.8 6.8L10.6 0.1" stroke="#a0a0a0" stroke-width="1"/></svg><svg class="id" width="12" height="12" viewBox="0 0 12 12"><path d="M0 2.5H10.6" stroke="#a8a8a8" stroke-width="1.1"/><path d="M3.1 2.4V0.6H7.5V2.4" fill="none" stroke="#a8a8a8" stroke-width="1.1"/><path d="M1.8 3.4H5.6V10.6H1.8Z" fill="#e2e2e2"/><path d="M1.8 3.4V10.6H8.8V3.4M6.1 4V9.6" fill="none" stroke="#a8a8a8" stroke-width="1.1"/></svg></span><span class="ttl">文化产业助力中国南非伙伴关系发展</span><span class="qi"><svg class="iq" width="11" height="11" viewBox="0 0 11 11"><rect x="0.5" y="0.5" width="3.9" height="3.9" fill="none" stroke="#70747b" stroke-width="1"/><rect x="2" y="2" width="0.9" height="0.9" fill="#70747b"/><rect x="6.4" y="0.5" width="3.6" height="3.9" fill="none" stroke="#70747b" stroke-width="1"/><rect x="7.6" y="1.8" width="1.3" height="1.3" fill="#70747b"/><rect x="0.5" y="6.3" width="3.9" height="3.6" fill="none" stroke="#70747b" stroke-width="1"/><rect x="2" y="7.6" width="0.9" height="0.9" fill="#70747b"/><path d="M6 6.6H7.6V8.2M6.4 8.4V10.4M8.4 6V7.2L10 8.8V10.4M8 10.2H8.8" fill="none" stroke="#70747b" stroke-width="1"/></svg><svg class="ii" width="13" height="11" viewBox="0 0 13 11"><rect x="0.5" y="0.5" width="11" height="9.3" fill="none" stroke="#70747b" stroke-width="1"/><circle cx="3" cy="3.2" r="0.95" fill="#70747b"/><path d="M0.6 6.6Q1.8 7.8 3 7.4T6.8 3.4Q8.6 2.6 11.4 4.8" fill="none" stroke="#70747b" stroke-width="0.9"/></svg></span><span class="tags"><span class="tag">公关活动</span><span class="tag">行业资讯</span></span><span class="date">2019-06-10 15:09</span><span class="x"><svg width="8" height="8" viewBox="0 0 8 8"><path d="M0.5 0.5L6.9 6.9M6.9 0.5L0.5 6.9" stroke="#ee4270" stroke-width="1.15"/></svg></span><span class="perm">默认</span></div>
<div class="row g" style="top:527.80px"><i class="cb"></i><span class="ops"><svg class="iv" width="13" height="12" viewBox="0 0 13 12"><path d="M5 10.6H0.6V0.6H7.6Q9.6 0.6 9.6 2.6V5" fill="none" stroke="#a0a0a0" stroke-width="1.1"/><path d="M2.2 3.2H7.6M2.2 5.4H5.2M2.2 7.5H4.2" stroke="#a0a0a0" stroke-width="1"/><circle cx="8.2" cy="8.2" r="2.1" fill="none" stroke="#a0a0a0" stroke-width="1.1"/><path d="M9.8 9.8L11.6 11.4" stroke="#a0a0a0" stroke-width="1.1"/></svg><svg class="ie" width="12" height="12" viewBox="0 0 12 12"><path d="M5.6 0.6H0.6V10.6H10.6V5.2" fill="none" stroke="#a0a0a0" stroke-width="1.1"/><path d="M3.8 6.8L10.6 0.1" stroke="#a0a0a0" stroke-width="1"/></svg><svg class="id" width="12" height="12" viewBox="0 0 12 12"><path d="M0 2.5H10.6" stroke="#a8a8a8" stroke-width="1.1"/><path d="M3.1 2.4V0.6H7.5V2.4" fill="none" stroke="#a8a8a8" stroke-width="1.1"/><path d="M1.8 3.4H5.6V10.6H1.8Z" fill="#e2e2e2"/><path d="M1.8 3.4V10.6H8.8V3.4M6.1 4V9.6" fill="none" stroke="#a8a8a8" stroke-width="1.1"/></svg></span><span class="ttl">第十二届（上海）世界旅游博览会圆满闭幕</span><span class="qi"><svg class="iq" width="11" height="11" viewBox="0 0 11 11"><rect x="0.5" y="0.5" width="3.9" height="3.9" fill="none" stroke="#70747b" stroke-width="1"/><rect x="2" y="2" width="0.9" height="0.9" fill="#70747b"/><rect x="6.4" y="0.5" width="3.6" height="3.9" fill="none" stroke="#70747b" stroke-width="1"/><rect x="7.6" y="1.8" width="1.3" height="1.3" fill="#70747b"/><rect x="0.5" y="6.3" width="3.9" height="3.6" fill="none" stroke="#70747b" stroke-width="1"/><rect x="2" y="7.6" width="0.9" height="0.9" fill="#70747b"/><path d="M6 6.6H7.6V8.2M6.4 8.4V10.4M8.4 6V7.2L10 8.8V10.4M8 10.2H8.8" fill="none" stroke="#70747b" stroke-width="1"/></svg><svg class="ii" width="13" height="11" viewBox="0 0 13 11"><rect x="0.5" y="0.5" width="11" height="9.3" fill="none" stroke="#70747b" stroke-width="1"/><circle cx="3" cy="3.2" r="0.95" fill="#70747b"/><path d="M0.6 6.6Q1.8 7.8 3 7.4T6.8 3.4Q8.6 2.6 11.4 4.8" fill="none" stroke="#70747b" stroke-width="0.9"/></svg></span><span class="tags"><span class="tag">学院荣誉</span></span><span class="date">2019-05-16 00:00</span><span class="x"><svg width="8" height="8" viewBox="0 0 8 8"><path d="M0.5 0.5L6.9 6.9M6.9 0.5L0.5 6.9" stroke="#ee4270" stroke-width="1.15"/></svg></span><span class="perm">默认</span></div>
<div class="row" style="top:561.95px"><i class="cb"></i><span class="ops"><svg class="iv" width="13" height="12" viewBox="0 0 13 12"><path d="M5 10.6H0.6V0.6H7.6Q9.6 0.6 9.6 2.6V5" fill="none" stroke="#a0a0a0" stroke-width="1.1"/><path d="M2.2 3.2H7.6M2.2 5.4H5.2M2.2 7.5H4.2" stroke="#a0a0a0" stroke-width="1"/><circle cx="8.2" cy="8.2" r="2.1" fill="none" stroke="#a0a0a0" stroke-width="1.1"/><path d="M9.8 9.8L11.6 11.4" stroke="#a0a0a0" stroke-width="1.1"/></svg><svg class="ie" width="12" height="12" viewBox="0 0 12 12"><path d="M5.6 0.6H0.6V10.6H10.6V5.2" fill="none" stroke="#a0a0a0" stroke-width="1.1"/><path d="M3.8 6.8L10.6 0.1" stroke="#a0a0a0" stroke-width="1"/></svg><svg class="id" width="12" height="12" viewBox="0 0 12 12"><path d="M0 2.5H10.6" stroke="#a8a8a8" stroke-width="1.1"/><path d="M3.1 2.4V0.6H7.5V2.4" fill="none" stroke="#a8a8a8" stroke-width="1.1"/><path d="M1.8 3.4H5.6V10.6H1.8Z" fill="#e2e2e2"/><path d="M1.8 3.4V10.6H8.8V3.4M6.1 4V9.6" fill="none" stroke="#a8a8a8" stroke-width="1.1"/></svg></span><span class="ttl">第九届华中旅游博览会18日开幕</span><span class="qi"><svg class="iq" width="11" height="11" viewBox="0 0 11 11"><rect x="0.5" y="0.5" width="3.9" height="3.9" fill="none" stroke="#70747b" stroke-width="1"/><rect x="2" y="2" width="0.9" height="0.9" fill="#70747b"/><rect x="6.4" y="0.5" width="3.6" height="3.9" fill="none" stroke="#70747b" stroke-width="1"/><rect x="7.6" y="1.8" width="1.3" height="1.3" fill="#70747b"/><rect x="0.5" y="6.3" width="3.9" height="3.6" fill="none" stroke="#70747b" stroke-width="1"/><rect x="2" y="7.6" width="0.9" height="0.9" fill="#70747b"/><path d="M6 6.6H7.6V8.2M6.4 8.4V10.4M8.4 6V7.2L10 8.8V10.4M8 10.2H8.8" fill="none" stroke="#70747b" stroke-width="1"/></svg><svg class="ii" width="13" height="11" viewBox="0 0 13 11"><rect x="0.5" y="0.5" width="11" height="9.3" fill="none" stroke="#70747b" stroke-width="1"/><circle cx="3" cy="3.2" r="0.95" fill="#70747b"/><path d="M0.6 6.6Q1.8 7.8 3 7.4T6.8 3.4Q8.6 2.6 11.4 4.8" fill="none" stroke="#70747b" stroke-width="0.9"/></svg></span><span class="tags"><span class="tag">学院荣誉</span></span><span class="date">2019-05-16 00:00</span><span class="x"><svg width="8" height="8" viewBox="0 0 8 8"><path d="M0.5 0.5L6.9 6.9M6.9 0.5L0.5 6.9" stroke="#ee4270" stroke-width="1.15"/></svg></span><span class="perm">默认</span></div>
<div class="row g" style="top:596.10px"><i class="cb"></i><span class="ops"><svg class="iv" width="13" height="12" viewBox="0 0 13 12"><path d="M5 10.6H0.6V0.6H7.6Q9.6 0.6 9.6 2.6V5" fill="none" stroke="#a0a0a0" stroke-width="1.1"/><path d="M2.2 3.2H7.6M2.2 5.4H5.2M2.2 7.5H4.2" stroke="#a0a0a0" stroke-width="1"/><circle cx="8.2" cy="8.2" r="2.1" fill="none" stroke="#a0a0a0" stroke-width="1.1"/><path d="M9.8 9.8L11.6 11.4" stroke="#a0a0a0" stroke-width="1.1"/></svg><svg class="ie" width="12" height="12" viewBox="0 0 12 12"><path d="M5.6 0.6H0.6V10.6H10.6V5.2" fill="none" stroke="#a0a0a0" stroke-width="1.1"/><path d="M3.8 6.8L10.6 0.1" stroke="#a0a0a0" stroke-width="1"/></svg><svg class="id" width="12" height="12" viewBox="0 0 12 12"><path d="M0 2.5H10.6" stroke="#a8a8a8" stroke-width="1.1"/><path d="M3.1 2.4V0.6H7.5V2.4" fill="none" stroke="#a8a8a8" stroke-width="1.1"/><path d="M1.8 3.4H5.6V10.6H1.8Z" fill="#e2e2e2"/><path d="M1.8 3.4V10.6H8.8V3.4M6.1 4V9.6" fill="none" stroke="#a8a8a8" stroke-width="1.1"/></svg></span><span class="ttl">第十二届（上海）世界旅游博览会圆满闭幕</span><span class="qi"><svg class="iq" width="11" height="11" viewBox="0 0 11 11"><rect x="0.5" y="0.5" width="3.9" height="3.9" fill="none" stroke="#70747b" stroke-width="1"/><rect x="2" y="2" width="0.9" height="0.9" fill="#70747b"/><rect x="6.4" y="0.5" width="3.6" height="3.9" fill="none" stroke="#70747b" stroke-width="1"/><rect x="7.6" y="1.8" width="1.3" height="1.3" fill="#70747b"/><rect x="0.5" y="6.3" width="3.9" height="3.6" fill="none" stroke="#70747b" stroke-width="1"/><rect x="2" y="7.6" width="0.9" height="0.9" fill="#70747b"/><path d="M6 6.6H7.6V8.2M6.4 8.4V10.4M8.4 6V7.2L10 8.8V10.4M8 10.2H8.8" fill="none" stroke="#70747b" stroke-width="1"/></svg><svg class="ii" width="13" height="11" viewBox="0 0 13 11"><rect x="0.5" y="0.5" width="11" height="9.3" fill="none" stroke="#70747b" stroke-width="1"/><circle cx="3" cy="3.2" r="0.95" fill="#70747b"/><path d="M0.6 6.6Q1.8 7.8 3 7.4T6.8 3.4Q8.6 2.6 11.4 4.8" fill="none" stroke="#70747b" stroke-width="0.9"/></svg></span><span class="tags"><span class="tag">学院荣誉</span></span><span class="date">2019-05-16 00:00</span><span class="x"><svg width="8" height="8" viewBox="0 0 8 8"><path d="M0.5 0.5L6.9 6.9M6.9 0.5L0.5 6.9" stroke="#ee4270" stroke-width="1.15"/></svg></span><span class="perm">默认</span></div>
</div>
</body></html>
